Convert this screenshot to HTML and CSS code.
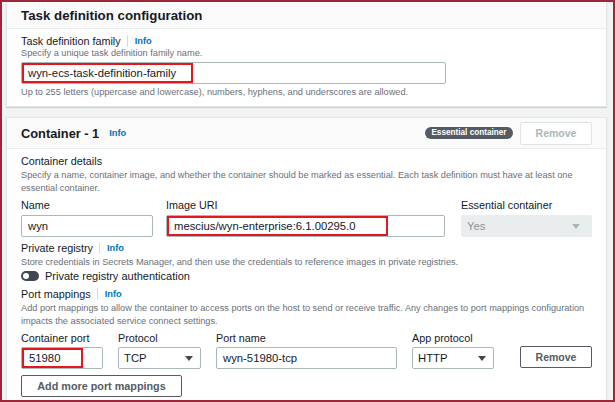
FILE: index.html
```html
<!DOCTYPE html>
<html lang="en">
<head>
    <meta charset="UTF-8">
    <meta name="viewport" content="width=device-width, initial-scale=1.0">
    <title>Task definition configuration</title>
    <link rel="stylesheet" href="styles.css">
</head>
<body>
    <div class="frame">
        <section class="card card-top">
            <header class="card-head">
                <h2>Task definition configuration</h2>
            </header>
            <div class="card-body">
                <div class="label-row">
                    <span>Task definition family</span><span class="sep"></span><a class="info" href="#">Info</a>
                </div>
                <p class="desc">Specify a unique task definition family name.</p>
                <div class="input marked input-family">
                    <span class="mark mark-family">wyn-ecs-task-definition-family</span>
                </div>
                <p class="desc help">Up to 255 letters (uppercase and lowercase), numbers, hyphens, and underscores are allowed.</p>
            </div>
        </section>

        <section class="card card-main">
            <header class="card-head">
                <h2>Container - 1</h2>
                <a class="info" href="#">Info</a>
                <div class="head-actions">
                    <span class="badge">Essential container</span>
                    <button type="button" class="btn btn-remove btn-disabled">Remove</button>
                </div>
            </header>
            <div class="card-body">
                <div class="section-title">Container details</div>
                <p class="desc desc-lg">Specify a name, container image, and whether the container should be marked as essential. Each task definition must have at least one<br>essential container.</p>

                <div class="fields">
                    <div class="field f-name">
                        <span class="label">Name</span>
                        <div class="input">wyn</div>
                    </div>
                    <div class="field f-image">
                        <span class="label">Image URI</span>
                        <div class="input marked">
                            <span class="mark mark-image">mescius/wyn-enterprise:6.1.00295.0</span>
                        </div>
                    </div>
                    <div class="field f-essential">
                        <span class="label">Essential container</span>
                        <div class="input select select-disabled">
                            <span>Yes</span>
                            <svg width="8" height="5" viewBox="0 0 8 5"><path d="M0 0h8L4 5z" fill="#aab7b8"/></svg>
                        </div>
                    </div>
                </div>

                <div class="label-row spaced">
                    <span>Private registry</span><span class="sep"></span><a class="info" href="#">Info</a>
                </div>
                <p class="desc desc-lg">Store credentials in Secrets Manager, and then use the credentials to reference images in private registries.</p>
                <div class="toggle-row">
                    <span class="toggle"></span>
                    <span>Private registry authentication</span>
                </div>

                <div class="label-row spaced">
                    <span>Port mappings</span><span class="sep"></span><a class="info" href="#">Info</a>
                </div>
                <p class="desc desc-lg">Add port mappings to allow the container to access ports on the host to send or receive traffic. Any changes to port mappings configuration<br>impacts the associated service connect settings.</p>

                <div class="fields port-row">
                    <div class="field f-port">
                        <span class="label">Container port</span>
                        <div class="input marked">
                            <span class="mark mark-port">51980</span>
                        </div>
                    </div>
                    <div class="field f-protocol">
                        <span class="label">Protocol</span>
                        <div class="input select">
                            <span>TCP</span>
                            <svg width="8" height="5" viewBox="0 0 8 5"><path d="M0 0h8L4 5z" fill="#414750"/></svg>
                        </div>
                    </div>
                    <div class="field f-portname">
                        <span class="label">Port name</span>
                        <div class="input">wyn-51980-tcp</div>
                    </div>
                    <div class="field f-app">
                        <span class="label">App protocol</span>
                        <div class="input select">
                            <span>HTTP</span>
                            <svg width="8" height="5" viewBox="0 0 8 5"><path d="M0 0h8L4 5z" fill="#414750"/></svg>
                        </div>
                    </div>
                    <button type="button" class="btn btn-remove">Remove</button>
                </div>

                <button type="button" class="btn btn-add">Add more port mappings</button>
            </div>
        </section>
    </div>
</body>
</html>
```

FILE: styles.css
```css
body {
    margin: 0;
    font-family: "Liberation Sans", Arial, sans-serif;
    color: #16191f;
    background: #fff;
}
.frame {
    width: 615px;
    height: 402px;
    box-sizing: border-box;
    border: 2px solid #9c2638;
    background: #f2f3f3;
    padding: 0 6px 0 4px;
    overflow: hidden;
}
.card {
    background: #fff;
    border: 1px solid #e3e6e6;
    box-shadow: 0 1px 1px rgba(0, 28, 36, 0.15);
}
.card-top {
    border-top: 0;
}
.card-main {
    margin-top: 10px;
}
.card-head {
    display: flex;
    align-items: center;
    background: #fafafa;
    border-bottom: 1px solid #eaeded;
    padding: 0 14px;
}
.card-top .card-head {
    height: 26px;
}
.card-main .card-head {
    height: 30px;
}
h2 {
    margin: 0;
    font-size: 13.3px;
    font-weight: bold;
}
.card-main h2 {
    font-size: 12.8px;
}
.info {
    color: #0073bb;
    font-weight: bold;
    font-size: 9.3px;
    text-decoration: none;
}
.card-head .info {
    margin-left: 10px;
}
.head-actions {
    margin-left: auto;
    display: flex;
    align-items: center;
    gap: 7px;
}
.badge {
    background: #545b64;
    color: #fff;
    font-size: 8.2px;
    font-weight: bold;
    height: 12px;
    line-height: 12px;
    padding: 0 6.5px;
    border-radius: 7px;
}
.btn {
    box-sizing: border-box;
    height: 22px;
    padding: 0;
    background: #fff;
    border: 1px solid #545b64;
    border-radius: 2px;
    color: #545b64;
    font-family: "Liberation Sans", Arial, sans-serif;
    font-weight: bold;
    font-size: 10.5px;
}
.btn-remove {
    width: 72px;
}
.btn-disabled {
    height: 23px;
    border-color: #e1e4e4;
    color: #aab7b8;
}
.btn-add {
    display: block;
    width: 161px;
    margin-top: 6px;
    font-size: 10.8px;
}
.card-body {
    padding: 5px 14px 8px;
}
.label-row {
    display: flex;
    align-items: center;
    font-size: 10.8px;
    line-height: 14px;
}
.label-row.spaced {
    margin-top: 3px;
    line-height: 16px;
}
.sep {
    width: 1px;
    height: 12px;
    background: #d5dbdb;
    margin: 0 7px 0 6px;
}
.desc {
    margin: 0;
    font-size: 9.2px;
    line-height: 11px;
    color: #687078;
}
.desc.help {
    margin-top: 2px;
    line-height: 12px;
}
.desc-lg {
    line-height: 13px;
}
.section-title {
    font-size: 10.8px;
    line-height: 15px;
}
.input {
    display: flex;
    align-items: center;
    box-sizing: border-box;
    height: 22px;
    padding: 0 6px;
    border: 1px solid #aab7b8;
    border-radius: 2px;
    background: #fff;
    font-size: 11.3px;
}
.input-family {
    width: 425px;
    margin-top: 3px;
}
.input.marked {
    padding: 0;
}
.mark {
    display: flex;
    align-items: center;
    box-sizing: border-box;
    height: 20px;
    padding-left: 4px;
    border: 2px solid #e4161e;
}
.mark-family {
    width: 171px;
}
.mark-image {
    width: 221px;
    padding-left: 5px;
}
.mark-port {
    width: 61px;
    padding-left: 5px;
}
.fields {
    display: flex;
    margin-top: 2px;
}
.field .label {
    display: block;
    font-size: 10.8px;
    line-height: 16px;
}
.field .input {
    margin-top: 2px;
}
.f-name {
    width: 132px;
    margin-right: 13px;
}
.f-image {
    width: 279px;
    margin-right: 16px;
}
.f-essential {
    width: 131px;
}
.select {
    justify-content: space-between;
    padding: 0 7px 0 5px;
}
.select-disabled {
    background: #eaeded;
    border-color: #eaeded;
    color: #879596;
    padding-right: 11px;
}
.toggle-row {
    display: flex;
    align-items: center;
    gap: 6px;
    font-size: 11px;
    line-height: 14px;
}
.toggle {
    position: relative;
    width: 18px;
    height: 10px;
    border-radius: 5px;
    background: #414750;
}
.toggle::after {
    content: "";
    position: absolute;
    left: 2px;
    top: 2px;
    width: 6px;
    height: 6px;
    border-radius: 50%;
    background: #fff;
}
.port-row {
    align-items: flex-end;
    gap: 15px;
}
.port-row .field .input {
    margin-top: 1px;
}
.f-port {
    width: 82px;
}
.f-protocol {
    width: 83px;
}
.f-portname {
    width: 181px;
}
.f-app {
    width: 82px;
}
.port-row .btn-remove {
    margin-left: 11px;
    margin-bottom: 1px;
}
```
